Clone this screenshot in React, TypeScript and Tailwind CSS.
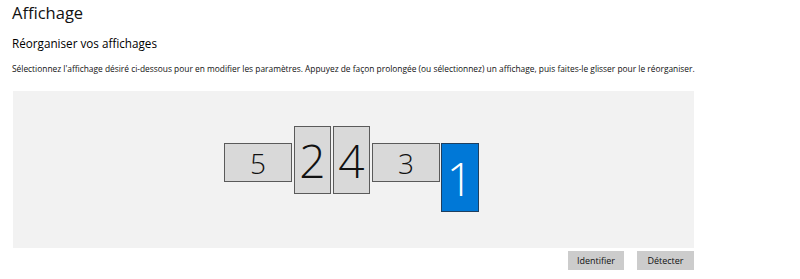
import React from 'react';

type Screen = { id: number; left: number; top: number; w: number; h: number; size: number; active?: boolean };

const screens: Screen[] = [
  { id: 5, left: 211, top: 52, w: 68, h: 39, size: 28 },
  { id: 2, left: 281, top: 35, w: 37, h: 68, size: 46 },
  { id: 4, left: 320, top: 35, w: 37, h: 68, size: 46 },
  { id: 3, left: 359, top: 52, w: 68, h: 39, size: 28 },
  { id: 1, left: 428, top: 52, w: 38, h: 69, size: 46, active: true },
];

export default function App() {
  return (
    <div className="w-[800px] h-[279px] bg-white text-[#000] font-['Open_Sans',sans-serif] overflow-hidden">
      <div className="pl-[12px] pt-[1px]">
        <h1 className="text-[16.5px] leading-[24px] font-normal text-[#111]">Affichage</h1>
        <h2 className="mt-[10px] text-[11.7px] leading-[16px] font-normal">Réorganiser vos affichages</h2>
        <p className="mt-[12px] text-[8.4px] leading-[12px] text-[#111]">
          Sélectionnez l'affichage désiré ci-dessous pour en modifier les paramètres. Appuyez de façon prolongée (ou sélectionnez) un affichage, puis faites-le glisser pour le réorganiser.
        </p>
      </div>

      <div className="ml-[13px] mt-[16px] w-[681px]">
        <div className="relative h-[157px] bg-[#f2f2f2]">
          {screens.map((s) => (
            <div
              key={s.id}
              className={
                s.active
                  ? 'absolute flex items-center justify-center bg-[#0078d7] border border-[#1f3f5f] text-white font-light'
                  : 'absolute flex items-center justify-center bg-[#d9d9d9] border border-[#5a5a5a] text-[#111] font-light'
              }
              style={{ left: s.left, top: s.top, width: s.w, height: s.h, fontSize: s.size, lineHeight: 1 }}
            >
              {s.id}
            </div>
          ))}
        </div>
        <div className="flex justify-end gap-[13px] mt-[3px]">
          <button className="w-[56px] h-[19px] bg-[#cccccc] text-[9px] text-[#111]">Identifier</button>
          <button className="w-[57px] h-[19px] bg-[#cccccc] text-[9px] text-[#111]">Détecter</button>
        </div>
      </div>
    </div>
  );
}
